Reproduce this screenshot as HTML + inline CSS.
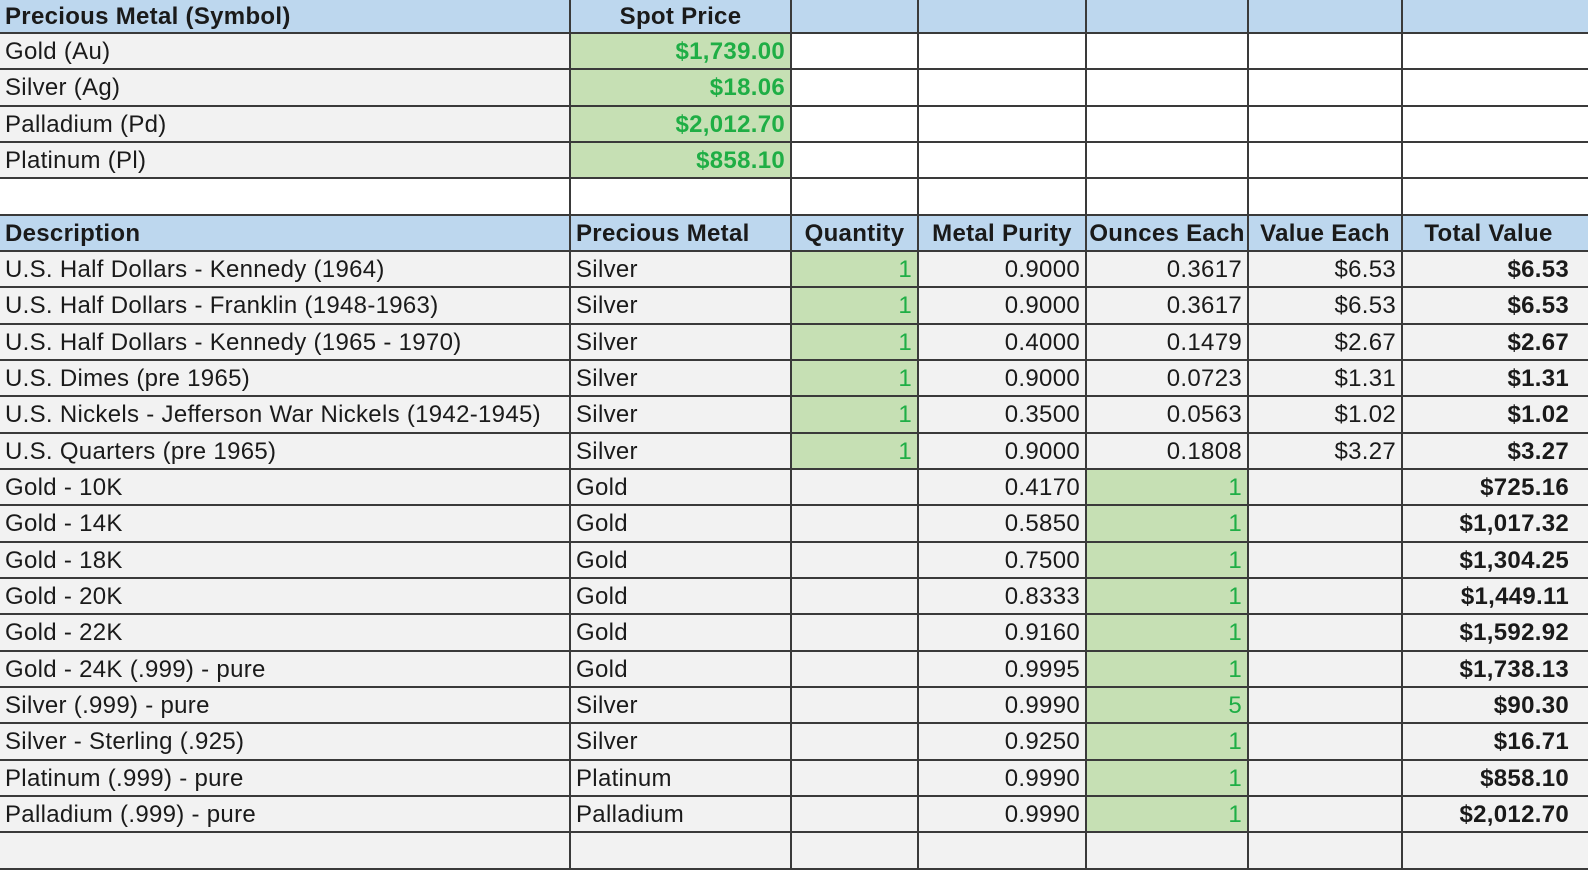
<!DOCTYPE html>
<html><head><meta charset="utf-8"><style>
body{margin:0;background:#fff;width:1588px;height:845px;overflow:hidden;font-family:"Liberation Sans",sans-serif;}
.g{position:absolute;left:-2px;top:-1px;display:grid;background:#3a3a3a;gap:2px;padding:0 2px 2px 2px;
grid-template-columns:569px 219px 125px 166px 160px 152px 200px;
grid-template-rows:33px repeat(23,34.33px);}
.g div{background:#f2f2f2;font-size:24px;letter-spacing:0.3px;color:#1a1a1a;white-space:nowrap;overflow:hidden;padding:2px 5px 0 5px;display:flex;align-items:center;}
.g div:nth-child(7n){padding-right:34px}
.h{background:#bdd7ee!important;font-weight:bold;}
.r{justify-content:flex-end}
.c{justify-content:center}
.gr{background:#c6e0b4!important;color:#1fae45!important;font-weight:bold;justify-content:flex-end}
.gn{background:#c6e0b4!important;color:#1fae45!important;justify-content:flex-end}
.w{background:#fff!important}
.b{font-weight:bold;justify-content:flex-end}
</style></head><body>
<div class="g">
<div class="h">Precious Metal (Symbol)</div><div class="h c">Spot Price</div><div class="h"></div><div class="h"></div><div class="h"></div><div class="h"></div><div class="h"></div>
<div>Gold (Au)</div><div class="gr">$1,739.00</div><div class="w"></div><div class="w"></div><div class="w"></div><div class="w"></div><div class="w"></div>
<div>Silver (Ag)</div><div class="gr">$18.06</div><div class="w"></div><div class="w"></div><div class="w"></div><div class="w"></div><div class="w"></div>
<div>Palladium (Pd)</div><div class="gr">$2,012.70</div><div class="w"></div><div class="w"></div><div class="w"></div><div class="w"></div><div class="w"></div>
<div>Platinum (Pl)</div><div class="gr">$858.10</div><div class="w"></div><div class="w"></div><div class="w"></div><div class="w"></div><div class="w"></div>
<div class="w"></div><div class="w"></div><div class="w"></div><div class="w"></div><div class="w"></div><div class="w"></div><div class="w"></div>
<div class="h">Description</div><div class="h">Precious Metal</div><div class="h c">Quantity</div><div class="h c">Metal Purity</div><div class="h c">Ounces Each</div><div class="h c">Value Each</div><div class="h c">Total Value</div>
<div>U.S. Half Dollars - Kennedy (1964)</div><div>Silver</div><div class="gn">1</div><div class="r">0.9000</div><div class="r">0.3617</div><div class="r">$6.53</div><div class="b">$6.53</div>
<div>U.S. Half Dollars - Franklin (1948-1963)</div><div>Silver</div><div class="gn">1</div><div class="r">0.9000</div><div class="r">0.3617</div><div class="r">$6.53</div><div class="b">$6.53</div>
<div>U.S. Half Dollars - Kennedy (1965 - 1970)</div><div>Silver</div><div class="gn">1</div><div class="r">0.4000</div><div class="r">0.1479</div><div class="r">$2.67</div><div class="b">$2.67</div>
<div>U.S. Dimes (pre 1965)</div><div>Silver</div><div class="gn">1</div><div class="r">0.9000</div><div class="r">0.0723</div><div class="r">$1.31</div><div class="b">$1.31</div>
<div>U.S. Nickels - Jefferson War Nickels (1942-1945)</div><div>Silver</div><div class="gn">1</div><div class="r">0.3500</div><div class="r">0.0563</div><div class="r">$1.02</div><div class="b">$1.02</div>
<div>U.S. Quarters (pre 1965)</div><div>Silver</div><div class="gn">1</div><div class="r">0.9000</div><div class="r">0.1808</div><div class="r">$3.27</div><div class="b">$3.27</div>
<div>Gold - 10K</div><div>Gold</div><div></div><div class="r">0.4170</div><div class="gn">1</div><div></div><div class="b">$725.16</div>
<div>Gold - 14K</div><div>Gold</div><div></div><div class="r">0.5850</div><div class="gn">1</div><div></div><div class="b">$1,017.32</div>
<div>Gold - 18K</div><div>Gold</div><div></div><div class="r">0.7500</div><div class="gn">1</div><div></div><div class="b">$1,304.25</div>
<div>Gold - 20K</div><div>Gold</div><div></div><div class="r">0.8333</div><div class="gn">1</div><div></div><div class="b">$1,449.11</div>
<div>Gold - 22K</div><div>Gold</div><div></div><div class="r">0.9160</div><div class="gn">1</div><div></div><div class="b">$1,592.92</div>
<div>Gold - 24K (.999) - pure</div><div>Gold</div><div></div><div class="r">0.9995</div><div class="gn">1</div><div></div><div class="b">$1,738.13</div>
<div>Silver (.999) - pure</div><div>Silver</div><div></div><div class="r">0.9990</div><div class="gn">5</div><div></div><div class="b">$90.30</div>
<div>Silver - Sterling (.925)</div><div>Silver</div><div></div><div class="r">0.9250</div><div class="gn">1</div><div></div><div class="b">$16.71</div>
<div>Platinum (.999) - pure</div><div>Platinum</div><div></div><div class="r">0.9990</div><div class="gn">1</div><div></div><div class="b">$858.10</div>
<div>Palladium (.999) - pure</div><div>Palladium</div><div></div><div class="r">0.9990</div><div class="gn">1</div><div></div><div class="b">$2,012.70</div>
<div></div><div></div><div></div><div></div><div></div><div></div><div></div>
</div>
</body></html>
